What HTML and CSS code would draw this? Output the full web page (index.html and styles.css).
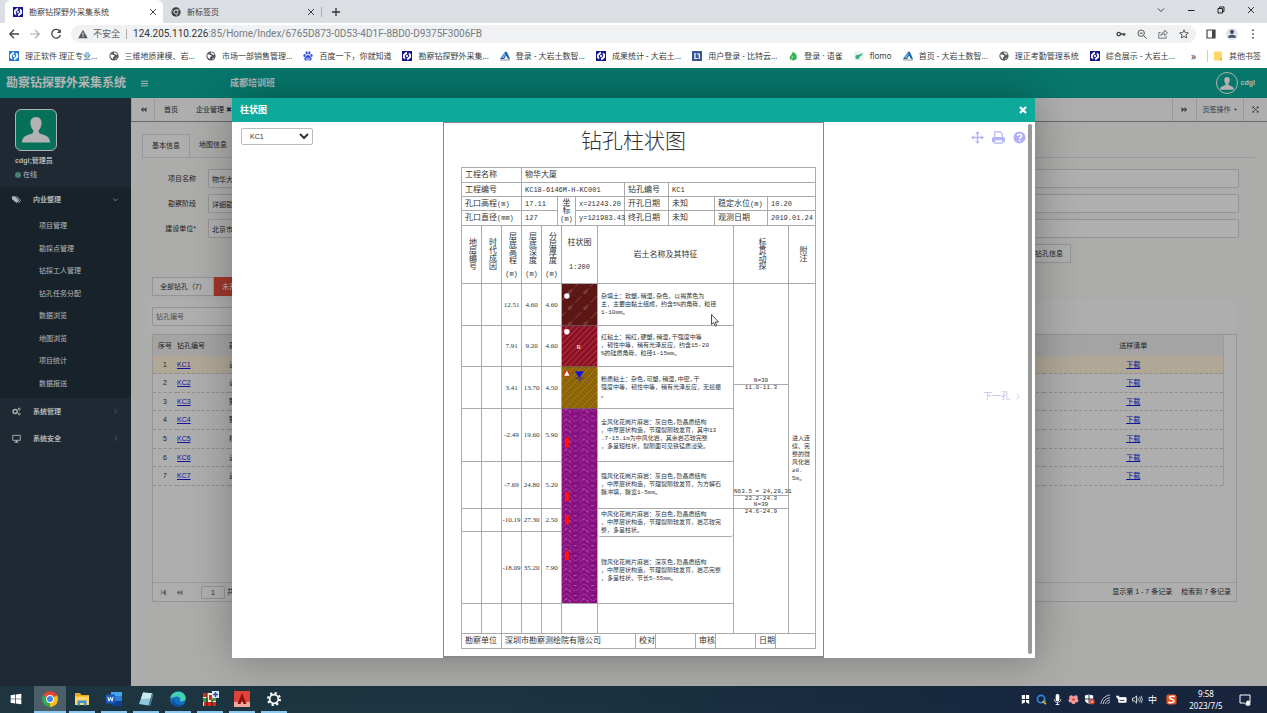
FILE: index.html
```html
<!DOCTYPE html>
<html lang="zh-CN">
<head>
  <meta charset="UTF-8">
  <title>勘察钻探野外采集系统</title>
  <link rel="stylesheet" href="styles.css">
</head>
<body>
  <!-- shared icons -->
  <svg class="defs" width="0" height="0">
    <symbol id="i-logo" viewBox="0 0 10 10"><rect width="10" height="10" fill="#14148c"/><path d="M4.500.6L1 3.400v3.400l2.200 1.700V5.900L2.400 5l2.800-2.600zM5.500 9.400L9 6.600V3.200L6.800 1.500v2.600l.8.9-2.800 2.600z" fill="#fff"/><path d="M5 3.600L6.300 5 5 6.400 3.700 5z" fill="#fff"/></symbol>
    <symbol id="i-logo2" viewBox="0 0 10 10"><rect width="10" height="10" fill="#2277d8"/><path d="M4.500.6L1 3.400v3.400l2.200 1.700V5.900L2.400 5l2.800-2.600zM5.500 9.400L9 6.600V3.200L6.800 1.500v2.600l.8.9-2.800 2.600z" fill="#fff"/><path d="M5 3.600L6.300 5 5 6.400 3.700 5z" fill="#fff"/></symbol>
    <symbol id="i-globe" viewBox="0 0 10 10"><circle cx="5" cy="5" r="4.600" fill="#55585c"/><path d="M1.400 3.600C3 3 4 4 5 4.200c1 .2.4 1.400-.4 1.500C3.800 6 4.400 7.200 3.600 8 2.200 7.400 1 5.600 1.400 3.600zM5 1.300c1.400 0 3 .9 3.500 2.700-.9.2-1.500-.6-2.300-.7C5.400 3.200 4.600 2 5 1.300zM6.200 8.500c0-1 .9-1.500 2.100-2-.5 1.200-1.200 1.700-2.100 2z" fill="#fff"/></symbol>
    <symbol id="i-peak" viewBox="0 0 10 10"><path d="M5.200.8L0 8h4.200L6 4.600 8.200 8H10L6.800.8z" fill="#1b62ad"/><path d="M5 2L1.500 7h2L5.800 3z" fill="#7db9ea"/><path d="M0 9h10" stroke="#8a9099"/></symbol>
    <symbol id="i-user" viewBox="0 0 28 26"><path d="M14 0c-4 0-6 3-5.500 7 .3 3 1.500 5 2.800 6.300.3 1.700-.3 2.700-1.300 3.200C5 18.500 0 19 0 25.500h28c0-6.500-5-7-10-9-1-.5-1.600-1.500-1.300-3.200C18 12 19.200 10 19.500 7 20 3 18 0 14 0z"/></symbol>
    <symbol id="i-left2" viewBox="0 0 8 8"><path d="M4 1v6L.8 4zM7.400 1v6L4.200 4z" fill="currentColor"/></symbol>
    <symbol id="i-right2" viewBox="0 0 8 8"><path d="M.6 1v6l3.200-3zM4 1v6l3.200-3z" fill="currentColor"/></symbol>
    <symbol id="i-x" viewBox="0 0 8 8"><path d="M1 1l6 6M7 1L1 7" stroke="currentColor" fill="none"/></symbol>
  </svg>

  <header class="chrome">
    <div class="tabstrip">
      <div class="tab active"><svg class="fav"><use href="#i-logo"/></svg><span>勘察钻探野外采集系统</span><button class="tab-x" aria-label="关闭标签页"><svg><use href="#i-x"/></svg></button></div>
      <div class="tab"><svg class="fav" viewBox="0 0 10 10"><circle cx="5" cy="5" r="4.700" fill="#3c4043"/><circle cx="5" cy="5" r="2.400" fill="#dbdee3"/><circle cx="5" cy="5" r="1.600" fill="#3c4043"/><path d="M5 2.800h4.200M3 6L1 2.800M7 6L5 9.500" stroke="#dbdee3" stroke-width=".6"/></svg><span>新标签页</span><button class="tab-x" aria-label="关闭标签页"><svg><use href="#i-x"/></svg></button></div>
      <button class="new-tab" aria-label="新建标签页"><svg viewBox="0 0 10 10"><path d="M5 1v8M1 5h8" stroke="#333" stroke-width="1.300"/></svg></button>
      <div class="win">
        <button aria-label="标签页列表"><svg viewBox="0 0 10 10"><path d="M2 3.500l3 3 3-3" fill="none" stroke="#444"/></svg></button>
        <button aria-label="最小化"><svg viewBox="0 0 10 10"><path d="M2 5.500h6.500" stroke="#222"/></svg></button>
        <button aria-label="还原"><svg viewBox="0 0 10 10"><path d="M2 3.500h4.500V8H2zM3.500 3.500V2H8v4.500H6.500" fill="none" stroke="#222"/></svg></button>
        <button aria-label="关闭"><svg viewBox="0 0 10 10"><path d="M2 2l6 6M8 2L2 8" stroke="#222" stroke-width=".9"/></svg></button>
      </div>
    </div>
    <div class="toolbar">
      <button aria-label="后退"><svg viewBox="0 0 12 12"><path d="M11 6H2M6 1.800L1.800 6 6 10.200" fill="none" stroke="#444" stroke-width="1.300"/></svg></button>
      <button aria-label="前进"><svg viewBox="0 0 12 12"><path d="M1 6h9M6 1.800L10.200 6 6 10.200" fill="none" stroke="#aaa" stroke-width="1.200"/></svg></button>
      <button aria-label="刷新"><svg viewBox="0 0 12 12"><path d="M10 3.500A4.400 4.400 0 1 0 10.400 7" fill="none" stroke="#444" stroke-width="1.300"/><path d="M10.800 1v4H7z" fill="#444"/></svg></button>
      <div class="omnibox">
        <svg class="warn" viewBox="0 0 10 10"><path d="M5 .8L9.800 9.200H.2z" fill="#55585c"/><path d="M5 3.700v2.600M5 7v1" stroke="#fff"/></svg>
        <span class="unsafe">不安全</span>
        <span class="url"><b>124.205.110.226</b>:85/Home/Index/6765D873-0D53-4D1F-8BD0-D9375F3006FB</span>
        <span class="omni-icons">
          <svg viewBox="0 0 10 10"><circle cx="2.800" cy="5" r="1.700" fill="none" stroke="#444" stroke-width="1.300"/><path d="M4.500 5h5M8 5v2" stroke="#444" stroke-width="1.500"/></svg>
          <svg viewBox="0 0 10 10"><circle cx="4.200" cy="4.200" r="3.200" fill="none" stroke="#555"/><path d="M6.500 6.500L9.500 9.500M2.700 4.200h3" stroke="#555"/></svg>
          <svg viewBox="0 0 10 10"><path d="M2.500 3.500H.8v5.700h7.400V7M3 6.500c.3-2.400 1.700-3.500 3.700-3.500V1.200L9.500 4 6.700 6.500V4.800C5 4.800 4 5.300 3 6.500z" fill="none" stroke="#555" stroke-width=".8"/></svg>
          <svg viewBox="0 0 10 10"><path d="M5 .8l1.200 2.800 3.100.3L7 6l.7 3L5 7.400 2.300 9 3 6 .7 3.900l3.100-.3z" fill="none" stroke="#444" stroke-width=".9"/></svg>
        </span>
      </div>
      <button aria-label="侧边栏"><svg viewBox="0 0 12 12"><path d="M2 2h8v8H2z" fill="none" stroke="#444" stroke-width="1.200"/><path d="M7 2h3v8H7z" fill="#444"/></svg></button>
      <button aria-label="用户" class="me"><svg viewBox="0 0 12 12"><circle cx="6" cy="3.800" r="2.100" fill="#44506a"/><path d="M1.800 9.800c0-4 8.400-4 8.400 0z" fill="#44506a"/></svg></button>
      <button aria-label="菜单"><svg viewBox="0 0 12 12"><path d="M6 1.500v1.600M6 5.200v1.600M6 8.900v1.600" stroke="#444" stroke-width="1.600"/></svg></button>
    </div>
    <nav class="bookmarks">
      <a href="#"><svg><use href="#i-logo2"/></svg>理正软件 理正专业...</a>
      <a href="#"><svg><use href="#i-globe"/></svg>三维地质建模、岩...</a>
      <a href="#"><svg><use href="#i-globe"/></svg>市场一部销售管理...</a>
      <a href="#"><svg viewBox="0 0 10 10" fill="#3050d8"><ellipse cx="1.500" cy="4.500" rx="1.100" ry="1.500"/><ellipse cx="3.600" cy="1.900" rx="1.100" ry="1.600"/><ellipse cx="6.400" cy="1.900" rx="1.100" ry="1.600"/><ellipse cx="8.500" cy="4.500" rx="1.100" ry="1.500"/><path d="M5 4c1.400 0 1.900 1.400 3 2.400 1.500 1.500.3 3.400-1.400 3.100-1-.2-2.200-.2-3.200 0C1.700 9.800.5 7.900 2 6.400 3.100 5.400 3.600 4 5 4z"/><path d="M3 7.200h1.500v1.300H3.200zM5.600 6.600v1.900H7V6.600" fill="none" stroke="#fff" stroke-width=".5"/></svg>百度一下，你就知道</a>
      <a href="#"><svg><use href="#i-logo"/></svg>勘察钻探野外采集...</a>
      <a href="#"><svg><use href="#i-peak"/></svg>登录 - 大岩土数智...</a>
      <a href="#"><svg><use href="#i-logo"/></svg>成果统计 - 大岩土...</a>
      <a href="#"><svg viewBox="0 0 10 10"><rect width="10" height="10" fill="#3a5795"/><path d="M3 2v5.500h2.500M4.800 3h2.500v5" fill="none" stroke="#fff" stroke-width="1.200"/></svg>用户登录 - 比特云...</a>
      <a href="#"><svg viewBox="0 0 10 10"><path d="M4.500 1C8 2 9.500 5 8.500 7.500S3.500 10 2 8s1.500-3 2.500-7z" fill="#35b558"/><path d="M1.500 9c2 0 3-2 3-4" stroke="#a8e6b4" fill="none"/></svg>登录 · 语雀</a>
      <a href="#"><svg viewBox="0 0 10 10"><rect width="10" height="10" rx="2" fill="#f1f4f2"/><circle cx="3.500" cy="6" r="2.200" fill="#35b58a"/><path d="M3 4.500L8.800 2 7 5.500z" fill="#35b58a"/></svg>flomo</a>
      <a href="#"><svg><use href="#i-peak"/></svg>首页 - 大岩土数智...</a>
      <a href="#"><svg><use href="#i-globe"/></svg>理正考勤管理系统</a>
      <a href="#"><svg><use href="#i-logo"/></svg>综合展示 - 大岩土...</a>
      <span class="more">»</span>
      <a href="#" class="other"><svg viewBox="0 0 10 10"><path d="M1 .5h8v9H1z" fill="#ffd766"/><path d="M7 7h2v2.500H7z" fill="#e8b93c"/></svg>其他书签</a>
    </nav>
  </header>

  <div class="app">
    <header class="app-head">
      <h1>勘察钻探野外采集系统</h1>
      <button class="burger" aria-label="折叠菜单"><svg viewBox="0 0 8 8"><path d="M0 1.500h8M0 4h8M0 6.500h8" stroke="#fff" stroke-width="1.200"/></svg></button>
      <strong>成都培训班</strong>
      <a href="#" class="account"><span><svg><use href="#i-user"/></svg></span>cdgl</a>
    </header>

    <div class="app-body">
      <aside class="sidebar">
        <div class="profile">
          <div class="avatar"><svg><use href="#i-user"/></svg></div>
          <b>cdgl;管理员</b>
          <p><i></i>在线</p>
        </div>
        <div class="group open">
          <a href="#" class="group-head"><svg viewBox="0 0 10 10"><path d="M0 1.500h3.500L8 6 5 9 0 4.800z" fill="#fff"/><path d="M5 1.500L9.600 6 6.800 9" fill="none" stroke="#fff"/></svg><span>内业整理</span><svg class="arrow" viewBox="0 0 8 8"><path d="M1.500 3L4 5.500 6.500 3" fill="none" stroke="#ccd"/></svg></a>
          <ul>
            <li><a href="#">项目管理</a></li>
            <li><a href="#">勘探点管理</a></li>
            <li><a href="#">钻探工人管理</a></li>
            <li><a href="#">钻孔任务分配</a></li>
            <li><a href="#">数据浏览</a></li>
            <li><a href="#">地图浏览</a></li>
            <li><a href="#">项目统计</a></li>
            <li><a href="#">数据报送</a></li>
          </ul>
        </div>
        <div class="group"><a href="#" class="group-head"><svg viewBox="0 0 10 10" fill="none" stroke="#fff"><circle cx="3.500" cy="5" r="2.300" stroke-width="1.600"/><circle cx="8" cy="2.300" r="1.100"/><circle cx="8" cy="7.700" r="1.100"/></svg><span>系统管理</span><svg class="arrow" viewBox="0 0 8 8"><path d="M3 1.500L5.500 4 3 6.500" fill="none" stroke="#789"/></svg></a></div>
        <div class="group"><a href="#" class="group-head"><svg viewBox="0 0 10 10"><path d="M.8 1.500h8.400v5.500H.8z" fill="none" stroke="#fff"/><path d="M3 9h4M5 7v2" stroke="#fff" stroke-width="1.300"/></svg><span>系统安全</span><svg class="arrow" viewBox="0 0 8 8"><path d="M3 1.500L5.500 4 3 6.500" fill="none" stroke="#789"/></svg></a></div>
      </aside>

      <main class="content">
        <nav class="page-tabs">
          <button class="icon-btn" aria-label="向左"><svg><use href="#i-left2"/></svg></button>
          <a href="#">首页</a>
          <a href="#">企业管理 ✖</a>
          <span class="spacer"></span>
          <button class="icon-btn" aria-label="向右"><svg><use href="#i-right2"/></svg></button>
          <button class="ops">页签操作<svg viewBox="0 0 6 6"><path d="M1 2h4L3 4.500z" fill="currentColor"/></svg></button>
          <button class="icon-btn" aria-label="全屏"><svg viewBox="0 0 8 8"><path d="M1 1l6 6M7 1L1 7" stroke="currentColor"/><path d="M.5.500H3L.5 3zM7.500.500V3L5 .5zM.5 7.500V5L3 7.500zM7.500 7.500H5L7.500 5z" fill="currentColor"/></svg></button>
        </nav>
        <div class="page">
          <nav class="info-tabs"><a href="#" class="on">基本信息</a><a href="#">地图信息</a></nav>
          <form class="info">
            <label for="f1">项目名称</label><input id="f1" value="物华大厦">
            <label for="f2">勘察阶段</label><input id="f2" value="详细勘察">
            <label for="f3">建设单位*</label><input id="f3" value="北京市">
          </form>
          <div class="info-actions"><button>钻孔信息</button></div>
          <div class="state-btns"><button>全部钻孔（7）</button><button class="red">未开孔</button></div>
          <div class="filter"><input aria-label="钻孔编号" placeholder="钻孔编号"></div>
          <div class="grid-box">
            <div class="grid-scroll">
              <table class="grid">
                <colgroup><col class="c-no"><col class="c-id"><col><col class="c-dl"></colgroup>
                <thead><tr><th>序号</th><th>钻孔编号</th><th>勘</th><th>送样清单</th></tr></thead>
                <tbody>
                  <tr class="sel"><td>1</td><td><a href="#">KC1</a></td><td>近</td><td><a href="#">下载</a></td></tr>
                  <tr><td>2</td><td><a href="#">KC2</a></td><td>近</td><td><a href="#">下载</a></td></tr>
                  <tr><td>3</td><td><a href="#">KC3</a></td><td>野</td><td><a href="#">下载</a></td></tr>
                  <tr><td>4</td><td><a href="#">KC4</a></td><td>野</td><td><a href="#">下载</a></td></tr>
                  <tr><td>5</td><td><a href="#">KC5</a></td><td>杨</td><td><a href="#">下载</a></td></tr>
                  <tr><td>6</td><td><a href="#">KC6</a></td><td>近</td><td><a href="#">下载</a></td></tr>
                  <tr><td>7</td><td><a href="#">KC7</a></td><td>近</td><td><a href="#">下载</a></td></tr>
                </tbody>
              </table>
            </div>
            <div class="pager">
              <button aria-label="首页"><svg viewBox="0 0 8 8"><path d="M1.500 1v6M6.500 1v6L3 4z" stroke="currentColor" fill="currentColor" stroke-width=".7"/></svg></button>
              <button aria-label="上一页"><svg><use href="#i-left2"/></svg></button>
              <input aria-label="页码" value="1"><span>共 1 页</span>
              <span class="total">显示第 1 - 7 条记录</span><span>检索到 7 条记录</span>
            </div>
          </div>
        </div>
      </main>
    </div>

    <div class="shade">
      <section class="modal">
        <header><h2>柱状图</h2><button aria-label="关闭"><svg viewBox="0 0 8 8"><path d="M1 1l6 6M7 1L1 7" stroke="#fff" stroke-width="2.200"/></svg></button></header>
        <div class="modal-body">
          <div class="side"><select aria-label="钻孔"><option>KC1</option><option>KC2</option></select></div>

          <article class="sheet">
            <h3>钻孔柱状图</h3>
            <table class="log meta">
              <colgroup><col class="w60"><col class="w36"><col class="w18"><col class="w49"><col class="w44"><col class="w46"><col class="w53"><col class="w48"></colgroup>
              <tr><td>工程名称</td><td colspan="7">物华大厦</td></tr>
              <tr><td>工程编号</td><td colspan="3" class="n">KC18-6146M-H-KC001</td><td>钻孔编号</td><td colspan="3" class="n">KC1</td></tr>
              <tr><td>孔口高程<span class="n">(m)</span></td><td class="n">17.11</td><td rowspan="2" class="coord">坐<br>标<br><span class="n">(m)</span></td><td class="n">x=21243.20</td><td>开孔日期</td><td>未知</td><td>稳定水位<span class="n">(m)</span></td><td class="n">10.20</td></tr>
              <tr><td>孔口直径<span class="n">(mm)</span></td><td class="n">127</td><td class="n">y=121983.43</td><td>终孔日期</td><td>未知</td><td>观测日期</td><td class="n">2019.01.24</td></tr>
            </table>
            <table class="log strata">
              <colgroup><col class="w20"><col class="w20"><col class="w20"><col class="w20"><col class="w20"><col class="w36"><col><col class="w55"><col class="w27"></colgroup>
              <thead>
                <tr>
                  <th><span class="v">地层编号</span></th>
                  <th><span class="v">时代成因</span></th>
                  <th><span class="v">层底高程</span><small>(m)</small></th>
                  <th><span class="v">层底深度</span><small>(m)</small></th>
                  <th><span class="v">分层厚度</span><small>(m)</small></th>
                  <th class="scale">柱状图<span class="n">1:200</span></th>
                  <th>岩土名称及其特征</th>
                  <th><span class="v">标贯动探</span></th>
                  <th><span class="v">附注</span></th>
                </tr>
              </thead>
              <tbody>
                <tr class="h42"><td></td><td></td><td>12.51</td><td>4.60</td><td>4.60</td>
                  <td rowspan="7" class="column">
                    <svg viewBox="0 0 36 320" preserveAspectRatio="none">
                      <defs>
                        <pattern id="p1" width="16" height="16" patternUnits="userSpaceOnUse"><path d="M-2 18L18-2" stroke="#a06a60" stroke-width=".7" stroke-dasharray="8 3"/><circle cx="8" cy="8" r="1.500" fill="none" stroke="#96605a" stroke-width=".5"/></pattern>
                        <pattern id="p2" width="6" height="6" patternUnits="userSpaceOnUse"><path d="M-1 7L7-1" stroke="#c0606c" stroke-width=".7"/></pattern>
                        <pattern id="p3" width="8" height="8" patternUnits="userSpaceOnUse"><path d="M-1 9L9-1" stroke="#c09a48" stroke-width=".7"/><path d="M3 9l6-6M-1 5l6-6" stroke="#c09a48" stroke-width=".6" stroke-dasharray="1.500 1.500"/></pattern>
                        <pattern id="p4" width="18" height="10" patternUnits="userSpaceOnUse"><path d="M0 5C3 0 6 0 9 4s6 5 9 1M0 10c3-5 6-5 9-1s6 5 9 1" fill="none" stroke="#b04fad" stroke-width=".7"/><path d="M3 6.500l2-1.500M12 2.500h3M7 8h2" stroke="#d58ad2" stroke-width=".6"/></pattern>
                      </defs>
                      <path d="M0 0h36v42H0z" fill="#5c1614"/><path d="M0 0h36v42H0z" fill="url(#p1)"/>
                      <path d="M0 42h36v41H0z" fill="#8e0f22"/><path d="M0 42h36v41H0z" fill="url(#p2)"/>
                      <path d="M0 83h36v42H0z" fill="#8a6000"/><path d="M0 83h36v42H0z" fill="url(#p3)"/>
                      <path d="M0 125h36v195H0z" fill="#86107f"/><path d="M0 125h36v195H0z" fill="url(#p4)"/>
                      <path d="M0 42h36M0 83h36M0 125h36" stroke="#555" stroke-width=".6"/>
                      <circle cx="5" cy="12" r="2.800" fill="#fff"/><circle cx="5" cy="48" r="2.800" fill="#fff"/>
                      <text x="15" y="65" class="r">R</text>
                      <circle cx="5" cy="90" r="3" fill="#e02818"/><path d="M5 87l2.800 5H2.200z" fill="#fff"/>
                      <path d="M14 88h8l-4 6zM14 94.500h8M16.500 96.500h3" fill="#1010e8" stroke="#1010e8" stroke-width=".6"/>
                      <path d="M3 154h4v10H3zM3 209h4v9H3zM3 232h4v9H3zM3 268h4v9H3z" fill="#ff1408"/>
                    </svg>
                  </td>
                  <td class="desc">杂填土：软塑,稍湿,杂色，以褐黄色为<br>主，主要由黏土组成，约含5%的角砾，粒径<br>1-10mm。</td>
                  <td rowspan="8" class="spt">
                    <div class="test first"><span>N=39</span><span>11.0-11.3</span></div>
                    <div class="test second"><span>N63.5 = 24,29,31</span><span>22.2-24.3</span></div>
                    <div class="test"><span>N=39</span><span>24.6-24.9</span></div>
                  </td>
                  <td rowspan="8" class="remark">进入连<br>续、完<br>整的微<br>风化岩<br>≥8.<br>5m。</td></tr>
                <tr class="h41"><td></td><td></td><td>7.91</td><td>9.20</td><td>4.60</td><td class="desc">红粘土：褐红,硬塑,稍湿,干强度中等<br>，韧性中等，稍有光泽反应，约含15-20<br>%的硅质角砾，粒径1-15mm。</td></tr>
                <tr class="h42"><td></td><td></td><td>3.41</td><td>13.70</td><td>4.50</td><td class="desc">粉质粘土：杂色,可塑,稍湿,中密,干<br>强度中等，韧性中等，稍有光泽反应，无摇振<br>。</td></tr>
                <tr class="h53"><td></td><td></td><td>-2.49</td><td>19.60</td><td>5.90</td><td class="desc">全风化花岗片麻岩：灰白色,隐晶质结构<br>，中厚层状构造，节理裂隙较发育，其中13<br>.7-15.1m为中风化岩，其余岩芯较完整<br>，多呈短柱状，裂隙面可见铁锰质浸染。</td></tr>
                <tr class="h47"><td></td><td></td><td>-7.69</td><td>24.80</td><td>5.20</td><td class="desc">强风化花岗片麻岩：灰白色,隐晶质结构<br>，中厚层状构造，节理裂隙较发育，为方解石<br>脉冲填，脉宽1-5mm。</td></tr>
                <tr class="h23"><td></td><td></td><td>-10.19</td><td>27.30</td><td>2.50</td>
                  <td rowspan="2" class="desc pair">
                    <p>中风化花岗片麻岩：灰白色,隐晶质结构<br>，中厚层状构造，节理裂隙较发育，岩芯较完<br>整，多呈柱状。</p>
                    <p>微风化花岗片麻岩：深灰色,隐晶质结构<br>，中厚层状构造，节理裂隙较发育，岩芯完整<br>，多呈柱状，节长5-55mm。</p>
                  </td></tr>
                <tr class="h72"><td></td><td></td><td>-18.09</td><td>35.20</td><td>7.90</td></tr>
                <tr class="h30"><td></td><td></td><td></td><td></td><td></td><td></td><td></td></tr>
              </tbody>
            </table>
            <table class="log sign">
              <colgroup><col class="w40"><col><col class="w20"><col class="w40"><col class="w20"><col class="w40"><col class="w20"><col class="w40"></colgroup>
              <tr><td>勘察单位</td><td>深圳市勘察测绘院有限公司</td><td>校对</td><td></td><td>审核</td><td></td><td>日期</td><td></td></tr>
            </table>
          </article>

          <div class="side right">
            <div class="tools">
              <button aria-label="移动"><svg viewBox="0 0 14 14"><path d="M7 2v10M2 7h10" stroke="#b4b4f8" stroke-width="1.500"/><path d="M7 0l2.500 3h-5zM7 14l2.500-3h-5zM0 7l3-2.500v5zM14 7l-3-2.500v5z" fill="#b4b4f8"/></svg></button>
              <button aria-label="打印"><svg viewBox="0 0 14 14"><path d="M3 7V1h6l2 2v4" fill="none" stroke="#b4b4f8" stroke-width="1.300"/><path d="M1.500 6.500h11Q14 7 14 8v4h-2.500V10h-9v2H0V8q0-1 1.500-1.500z" fill="#b4b4f8"/><path d="M3 10v3h8v-3" fill="none" stroke="#b4b4f8" stroke-width="1.200"/></svg></button>
              <button aria-label="帮助"><svg viewBox="0 0 14 14"><circle cx="7" cy="7" r="6.400" fill="#b0b0f8"/><path d="M4.900 5.400C5 2.800 9.200 2.900 9.200 5.300 9.200 7 7.100 6.700 7.100 8.600M7.100 9.600v1.700" fill="none" stroke="#fff" stroke-width="1.700"/></svg></button>
            </div>
            <a href="#" class="next">下一孔<svg viewBox="0 0 8 8"><path d="M3 1l3 3-3 3" fill="none" stroke="currentColor"/></svg></a>
          </div>
          <div class="scrollbar"></div>
          <svg class="cursor" viewBox="0 0 8 13"><path d="M.5.500v10l2.300-2 1.500 3.700 1.500-.7L4.300 8h3.200z" fill="#fff" stroke="#222" stroke-width=".8"/></svg>
        </div>
      </section>
    </div>
  </div>

  <footer class="taskbar">
    <button class="task plain" aria-label="开始"><svg viewBox="0 0 18 18"><path d="M3 4.700l5-.7v4.600H3zM8.800 3.900L15 3v5.600H8.800zM3 9.400h5V14l-5-.7zM8.800 9.400H15V15l-6.200-.9z" fill="#fff"/></svg></button>
    <button class="task current" aria-label="Chrome"><svg viewBox="0 0 18 18"><path d="M9 9L2.200 5A8 8 0 0 1 16 5.200z" fill="#ea4335"/><path d="M9 9l7-3.800A8 8 0 0 1 8.800 17z" fill="#fbc116"/><path d="M9 9l-.2 8A8 8 0 0 1 2.200 5z" fill="#34a853"/><circle cx="9" cy="9" r="3.900" fill="#fff"/><circle cx="9" cy="9" r="3" fill="#4285f4"/></svg></button>
    <button class="task" aria-label="资源管理器"><svg viewBox="0 0 18 18"><path d="M2 3h5l1.500 2H16v10H2z" fill="#e9a820"/><path d="M2 6.500h14V15H2z" fill="#ffd766"/><path d="M4.500 15.500v-5h9v5H11V13H7v2.500z" fill="#3b93d8"/></svg></button>
    <button class="task" aria-label="Word"><svg viewBox="0 0 18 18"><path d="M6 2h11v14H6z" fill="#2b7cd3"/><path d="M6 2h11v4H6z" fill="#41a5ee"/><path d="M6 11h11v5H6z" fill="#103f91"/><path d="M1 4.500h9v9H1z" fill="#185abd"/><path d="M2.800 6.800L4 11.200l1.500-4 1.500 4 1.200-4.400" fill="none" stroke="#fff"/></svg></button>
    <button class="task" aria-label="记事本"><svg viewBox="0 0 18 18"><path d="M6 2.500l9 .7-3.500 12.300L2 14z" fill="#8fc7d8"/><path d="M6 2.500l9 .7-1.500 5L4 9z" fill="#c9eaf0"/><path d="M15 3.200l1.500 1-3.300 12-1.700-.7z" fill="#4a7f95"/></svg></button>
    <button class="task" aria-label="Edge"><svg viewBox="0 0 18 18"><circle cx="9" cy="9" r="7.800" fill="#1271c4"/><path d="M1.300 8.500C2 .5 15.500-1 16.800 8c.2 3-3.800 4-6 3 2-3-2-5.500-5-4-1.600.6-3.500.5-4.500 1.500z" fill="#45d0b0"/><path d="M6 8c-2.500 4 1.500 8 7 6.500 1-.3 2-.8 2.500-1.200C13 18 6.500 18 4 14 2.600 11.500 4 9 6 8z" fill="#0c4f9b"/></svg></button>
    <button class="task" aria-label="理正"><svg viewBox="0 0 18 18"><path d="M2 3h13v13H2z" fill="#f3efd0"/><path d="M2 3h4v4H2zM8 5h3v5H8zM3 12h12v4H3z" fill="#d22b20"/><path d="M2 8h5v4H2zM10 8h5v3h-5z" fill="#3aa045"/><path d="M6 3v13M11 10v6" stroke="#222"/><path d="M11 1h7v7h-7z" fill="#dfeaff"/><path d="M14.500 2v5M12 4.500h5" stroke="#2b4fb0" stroke-width="1.500"/></svg></button>
    <button class="task" aria-label="AutoCAD"><svg viewBox="0 0 18 18"><path d="M1 1h16v16H1z" fill="#e0453a"/><path d="M1 12h16v5H1z" fill="#f2aaa0"/><path d="M9 3l4.500 11h-3L9 10l-1.500 4h-3z" fill="#8e120c"/></svg></button>
    <button class="task" aria-label="设置"><svg viewBox="0 0 18 18"><circle cx="9" cy="9" r="4.300" fill="none" stroke="#fff" stroke-width="1.700"/><circle cx="9" cy="9" r="6" fill="none" stroke="#fff" stroke-width="2" stroke-dasharray="2.300 2.400"/></svg></button>
    <div class="tray">
      <svg viewBox="0 0 12 12"><path d="M2 1h3.500v4.500H2zM6.500 1H10v4.500H6.500zM2 6.500h3.500V9L2 11zM6.500 6.500H10V11L6.500 9z" fill="#fff"/></svg>
      <svg viewBox="0 0 12 12"><circle cx="5.500" cy="5.500" r="4" fill="none" stroke="#2b8ce8" stroke-width="1.700"/><path d="M7 8l4 3" stroke="#f0b030" stroke-width="1.500"/><path d="M8 6.500l2.500 2" stroke="#3dba60" stroke-width="1.500"/></svg>
      <svg viewBox="0 0 12 12"><rect x="4" y="0" width="4" height="8" rx="2" fill="#fff"/><path d="M2.500 6c0 4 7 4 7 0M6 9v2.500M4 11.500h4" fill="none" stroke="#fff"/></svg>
      <svg viewBox="0 0 12 12"><g fill="#f09a9a"><circle cx="3.500" cy="3.500" r="2.200"/><circle cx="8.500" cy="3.500" r="2.200"/><circle cx="2.800" cy="7" r="2.200"/><circle cx="9.200" cy="7" r="2.200"/><circle cx="6" cy="9" r="2.200"/><circle cx="6" cy="5.500" r="3"/></g><circle cx="6" cy="6" r="1.300" fill="#d33"/></svg>
      <svg viewBox="0 0 12 12"><path d="M1 1.500l4.500-1 4.500 1V6c0 3-2.500 4-4.500 5C3.500 10 1 9 1 6z" fill="#fff"/><path d="M5.500.5v10M1 5.500h9" stroke="#1b2c45"/><circle cx="8.800" cy="8.500" r="3" fill="#e03c28"/><path d="M7.600 7.300L10 9.700M10 7.300L7.600 9.700" stroke="#fff" stroke-width=".8"/></svg>
      <svg viewBox="0 0 12 12"><path d="M1 11C1.500 6 5 2 11 1M3.500 11c.5-4 3-6.500 7.500-7M6 11c.5-2.500 2-4 5-4.500M8.500 11c.3-1.200 1-2 2.500-2.200" fill="none" stroke="#dfe4ea" stroke-width=".9"/></svg>
      <svg viewBox="0 0 12 12"><path d="M3 4h8v5H3z" fill="#fff" stroke="#fff"/><path d="M0 2h3.500v3H1z" fill="#fff"/><path d="M4 7h5" stroke="#1b2c45"/></svg>
      <svg viewBox="0 0 12 12"><path d="M.5 4.500h2L5 2v8L2.500 7.500h-2z" fill="none" stroke="#fff" stroke-width=".9"/><path d="M6.500 4.500q1 1.500 0 3M8.200 3q2 3 0 6M10 2q2.500 4 0 8" fill="none" stroke="#fff" stroke-width=".8"/></svg>
      <span>中</span>
      <svg viewBox="0 0 12 12"><rect x=".5" y=".5" width="11" height="11" rx="2" fill="#f0501c"/><path d="M9.500 2.800C6 1.700 3 3 4 4.500s5 .8 4.800 3C8.600 9.500 5 10 2.500 9" fill="none" stroke="#fff" stroke-width="1.700"/></svg>
    </div>
    <div class="clock"><span>9:58</span><span>2023/7/5</span></div>
    <button class="notice" aria-label="通知"><svg viewBox="0 0 12 12"><path d="M1 1h10v8H8v2.500L5.500 9H1z" fill="none" stroke="#fff"/><path d="M10.500 7a2.500 2.500 0 1 0 1 3.500" fill="#fff"/></svg></button>
  </footer>
</body>
</html>
```
FILE: styles.css
```css
* {
  box-sizing: border-box;
}
body {
  margin: 0;
  height: 100vh;
  display: flex;
  flex-direction: column;
  overflow: hidden;
  font: 7px/10px "Liberation Sans", "Noto Sans CJK SC", sans-serif;
  color: #333;
}
h1, h2, h3, p, ul {
  margin: 0;
  padding: 0;
}
a {
  color: inherit;
  text-decoration: none;
}
button, input, select {
  font: inherit;
  color: inherit;
  margin: 0;
}
button {
  padding: 0;
  border: 0;
  background: none;
}
svg {
  display: block;
  flex: none;
}
.defs {
  position: absolute;
}

/* browser window */
.chrome {
  font: 8px/12px "Noto Sans", "Noto Sans CJK SC", sans-serif;
  color: #3c4043;
  background: #fff;
}
.tabstrip {
  display: flex;
  align-items: center;
  height: 23px;
  padding-left: 5px;
  background: #dbdee3;
}
.tab {
  display: flex;
  align-items: center;
  gap: 6px;
  width: 158px;
  height: 23px;
  padding: 0 6px 0 8px;
}
.tab.active {
  background: #fff;
  border-radius: 6px 6px 0 0;
}
.tab .fav {
  width: 10px;
  height: 10px;
}
.tab-x {
  margin-left: auto;
}
.tab-x svg {
  width: 8px;
  height: 8px;
}
.new-tab {
  padding-left: 9px;
  border-left: 1px solid #aab;
}
.new-tab svg, .win svg {
  width: 10px;
  height: 10px;
}
.win {
  display: flex;
  gap: 20px;
  margin-left: auto;
  padding: 0 11px 4px 0;
}
.toolbar {
  display: flex;
  align-items: center;
  gap: 9px;
  height: 22px;
  padding: 0 8px;
}
.toolbar button svg {
  width: 12px;
  height: 12px;
}
.me {
  border-radius: 50%;
  background: #dfe3ea;
}
.omnibox {
  display: flex;
  flex: 1;
  align-items: center;
  height: 18px;
  padding: 0 7px;
  border-radius: 9px;
  background: #eff1f3;
}
.warn {
  width: 10px;
  height: 10px;
}
.unsafe {
  margin: 0 6px 0 5px;
  padding-right: 6px;
  border-right: 1px solid #aaa;
  font-size: 9px;
  line-height: 10px;
  color: #5f6368;
}
.url {
  font-family: Roboto, sans-serif;
  font-size: 10px;
  color: #777b80;
}
.url b {
  font-weight: normal;
  color: #333;
}
.omni-icons {
  display: flex;
  gap: 11px;
  margin-left: auto;
}
.omni-icons svg {
  width: 10px;
  height: 10px;
}
.bookmarks {
  display: flex;
  align-items: center;
  gap: 11px;
  height: 23px;
  padding: 0 6px 2px 9px;
  white-space: nowrap;
}
.bookmarks a {
  display: flex;
  align-items: center;
  gap: 6px;
}
.bookmarks svg {
  width: 10px;
  height: 10px;
}
.more {
  margin-left: auto;
  font-size: 10px;
}
.bookmarks .other {
  padding-left: 5px;
  border-left: 1px solid #ccc;
}

/* application */
.app {
  position: relative;
  display: flex;
  flex: 1;
  flex-direction: column;
  min-height: 0;
}
.app-head {
  display: flex;
  align-items: center;
  height: 30px;
  padding: 0 12px 0 6px;
  background: #0ba99a;
  color: #fff;
}
.app-head h1 {
  font-size: 12px;
  line-height: 16px;
}
.burger {
  margin: 0 82px 0 15px;
}
.burger svg {
  width: 7px;
  height: 7px;
}
.app-head strong {
  font-size: 9px;
}
.account {
  display: flex;
  align-items: center;
  gap: 3px;
  margin-left: auto;
  font-weight: bold;
}
.account span {
  display: flex;
  align-items: center;
  justify-content: center;
  width: 22px;
  height: 22px;
  border: 1px solid #fff;
  border-radius: 50%;
}
.account svg {
  width: 14px;
  height: 13px;
  fill: #fff;
}
.app-body {
  display: flex;
  flex: 1;
  min-height: 0;
}
.sidebar {
  width: 131px;
  background: #2b3c4b;
  color: #fff;
}
.profile {
  height: 89px;
  padding: 11px 15px 0;
}
.avatar {
  display: flex;
  align-items: center;
  justify-content: center;
  width: 42px;
  height: 42px;
  margin-bottom: 5px;
  border: 1px solid #fff;
  border-radius: 6px;
  background: #0ba17f;
}
.avatar svg {
  width: 28px;
  height: 26px;
  fill: #fff;
}
.profile b {
  display: block;
}
.profile p {
  display: flex;
  align-items: center;
  gap: 2px;
  margin-top: 4px;
}
.profile i {
  width: 6px;
  height: 6px;
  border-radius: 50%;
  background: #66b8a6;
}
.group.open {
  padding-bottom: 3px;
  background: #22313d;
}
.group-head {
  display: flex;
  align-items: center;
  height: 27px;
  padding: 0 12px;
  font-weight: bold;
}
.open .group-head {
  height: 25px;
}
.group-head svg {
  width: 9px;
  height: 9px;
}
.group-head span {
  flex: 1;
  margin-left: 12px;
}
.group-head .arrow {
  width: 7px;
  height: 7px;
}
.group ul {
  display: flex;
  flex-direction: column;
  height: 183px;
  padding: 3px 0 0 39px;
  list-style: none;
}
.group li {
  display: flex;
  flex: 1;
  align-items: center;
}
.content {
  flex: 1;
  min-width: 0;
  background: #f6f6f5;
}
.page-tabs {
  display: flex;
  align-items: center;
  height: 24px;
  border-bottom: 1px solid #999;
  background: #f9f9f9;
}
.page-tabs a {
  padding: 0 9px;
}
.page-tabs .spacer {
  flex: 1;
}
.page-tabs button {
  display: flex;
  align-items: center;
  justify-content: center;
  height: 23px;
  color: #555;
  border-left: 1px solid #ddd;
}
.icon-btn {
  width: 24px;
}
.icon-btn:first-child {
  border-right: 1px solid #ddd;
}
.icon-btn svg, .pager svg {
  width: 7px;
  height: 7px;
}
.page-tabs .ops {
  width: 47px;
  gap: 2px;
}
.ops svg {
  width: 5px;
  height: 5px;
}
.page {
  padding: 12px 12px 0 11px;
}
.info-tabs {
  display: flex;
  height: 24px;
  border-bottom: 1px solid #ddd;
}
.info-tabs a {
  padding: 6px 9px;
}
.info-tabs .on {
  border: 1px solid #ddd;
  border-bottom: 0;
  background: #fafafa;
}
.info {
  display: grid;
  grid-template-columns: 54px 1fr;
  gap: 6px 12px;
  align-items: center;
  padding: 11px 16px 0 0;
}
.info label {
  text-align: right;
}
.page input {
  height: 19px;
  padding: 0 3px;
  border: 1px solid #d4d4d4;
  border-radius: 1px;
  background: #fbfbfb;
}
.info-actions {
  display: flex;
  justify-content: flex-end;
  padding: 6px 184px 0 0;
}
.info-actions button, .state-btns button {
  height: 19px;
  padding: 0 7px;
  border: 1px solid #d4d4d4;
  background: #fbfbfb;
}
.state-btns {
  display: flex;
  margin: 14px 0 5px 10px;
}
.state-btns .red {
  border-color: #e5503c;
  background: #e5503c;
  color: #fff;
}
.filter {
  margin: 0 18px 2px 4px;
  padding: 6px;
  background: #fafafa;
}
.filter input {
  display: block;
  width: 180px;
}
.grid-box {
  margin: 0 18px 0 10px;
  border: 1px solid #d6d6d6;
  background: #f9f9f9;
}
.grid-scroll {
  height: 247px;
  padding-right: 12px;
}
.grid {
  width: 100%;
  height: 151px;
  border-collapse: collapse;
  table-layout: fixed;
  border-right: 1px solid #ddd;
}
.grid th {
  height: 21px;
  padding: 0;
  background: #ebebeb;
  font-weight: normal;
}
.grid td {
  padding: 0;
  border-bottom: 1px dashed #ccc;
}
.grid th:nth-child(2), .grid td:nth-child(2), .grid td:nth-child(3), .grid th:nth-child(3) {
  text-align: left;
}
.grid td:first-child, .grid td:last-child {
  text-align: center;
}
.grid a {
  color: #1c1ce0;
  text-decoration: underline;
}
.grid .sel {
  background: #fdf0d8;
}
.c-no {
  width: 24px;
}
.c-id {
  width: 52px;
}
.c-dl {
  width: 180px;
}
.pager {
  display: flex;
  align-items: center;
  gap: 9px;
  height: 19px;
  padding: 0 5px 0 7px;
  border-top: 1px solid #ddd;
}
.pager button {
  color: #888;
}
.pager input {
  width: 24px;
  height: 13px;
  margin-left: 9px;
  text-align: center;
}
.pager input + span {
  margin-left: -7px;
}
.pager .total {
  margin-left: auto;
}

/* borehole log dialog */
.shade {
  position: absolute;
  inset: 0;
  display: flex;
  justify-content: center;
  align-items: flex-start;
  padding-top: 30px;
  background: rgba(0, 0, 0, 0.3);
}
.modal {
  width: 803px;
  background: #fff;
  box-shadow: 1px 1px 40px rgba(0, 0, 0, 0.3);
}
.modal > header {
  display: flex;
  align-items: center;
  justify-content: space-between;
  height: 24px;
  padding: 0 8px;
  background: #0daa9c;
  color: #fff;
}
.modal h2 {
  font-size: 9px;
  line-height: 12px;
}
.modal > header svg {
  width: 8px;
  height: 8px;
}
.modal-body {
  position: relative;
  display: flex;
}
.side {
  flex: 1;
  padding: 6px 9px;
}
.side select {
  width: 72px;
  height: 17px;
  padding: 0 4px;
  border: 1px solid #bbb;
  border-radius: 2px;
  background: #fff;
}
.side.right {
  display: flex;
  flex-direction: column;
  align-items: flex-end;
  margin-right: -7px;
  padding-top: 9px;
}
.tools {
  display: flex;
  gap: 8px;
}
.tools svg {
  width: 13px;
  height: 13px;
}
.next {
  display: flex;
  align-items: center;
  gap: 4px;
  margin: 246px 5px 0 0;
  font-size: 9px;
  line-height: 12px;
  color: #c0c0ee;
}
.next svg {
  width: 7px;
  height: 7px;
}
.scrollbar {
  width: 4px;
  margin: 2px 3px 4px 0;
  border-radius: 2px;
  background: #999;
}
.cursor {
  position: absolute;
  left: 479px;
  top: 192px;
  width: 8px;
  height: 13px;
}
.sheet {
  width: 381px;
  padding: 0 8px 7px 17px;
  border: 1px solid #888;
  border-bottom-width: 2px;
  font: 8px/8px "Liberation Mono", "Noto Sans CJK SC", monospace;
}
.sheet h3 {
  padding: 9px 9px 13px 0;
  font-size: 21px;
  font-weight: 300;
  line-height: 22px;
  text-align: center;
}
.log {
  width: 355px;
  border-collapse: collapse;
  table-layout: fixed;
  font-size: 8px;
}
.log td, .log th {
  padding: 0;
  border: 1px solid #aaa;
  font-weight: normal;
  white-space: nowrap;
}
.log + .log {
  margin-top: -1px;
}
.log .n {
  font-size: 7px;
}
.meta tr {
  height: 14px;
}
.meta tr:first-child, .meta tr:last-child {
  height: 15px;
}
.meta td {
  padding-left: 3px;
}
.meta .coord {
  padding: 0;
  text-align: center;
}
.strata thead tr {
  height: 58px;
}
.v {
  display: inline-block;
  writing-mode: vertical-rl;
  text-orientation: upright;
}
.strata small {
  display: block;
  margin-top: 4px;
  font-size: 7px;
}
.scale .n {
  display: block;
  padding-top: 16px;
}
.strata td {
  font-family: "Liberation Serif", serif;
  font-size: 7px;
  text-align: center;
}
.h42 { height: 42px; }
.h41 { height: 41px; }
.h53 { height: 53px; }
.h47 { height: 47px; }
.h23 { height: 23px; }
.h72 { height: 72px; }
.h30 { height: 30px; }
.column svg {
  width: 100%;
  height: 319px;
}
.column .r {
  font: 7px "Liberation Serif", serif;
  fill: #fff;
}
.strata .desc, .strata .remark, .strata .spt {
  font-family: "Liberation Mono", "Noto Sans CJK SC", monospace;
  font-size: 6px;
}
.strata .desc, .strata .remark {
  padding-left: 3px;
  text-align: left;
}
.strata .pair {
  padding: 0;
  vertical-align: top;
}
.pair p {
  padding: 2px 3px 0;
}
.pair p:first-child {
  height: 28px;
  margin-bottom: 20px;
  border-bottom: 1px solid #aaa;
  border-radius: 0 0 3px 3px;
}
.strata .spt {
  vertical-align: top;
}
.test span {
  display: block;
  height: 7px;
  line-height: 6px;
}
.test span:first-child {
  border-bottom: 1px solid #aaa;
}
.test span + span {
  height: 6px;
}
.test.first {
  margin-top: 94px;
}
.test.second {
  margin-top: 98px;
}
.sign tr {
  height: 15px;
}
.sign td {
  padding-left: 3px;
}
.w18 { width: 18px; }
.w20 { width: 20px; }
.w27 { width: 27px; }
.w36 { width: 36px; }
.w40 { width: 40px; }
.w44 { width: 44px; }
.w46 { width: 46px; }
.w48 { width: 48px; }
.w49 { width: 49px; }
.w53 { width: 53px; }
.w55 { width: 55px; }
.w60 { width: 60px; }

/* windows taskbar */
.taskbar {
  display: flex;
  align-items: center;
  height: 27px;
  background: linear-gradient(90deg, #1e3540, #1b3542 40%, #16263f 85%, #18243c);
  color: #fff;
}
.task {
  display: flex;
  align-items: center;
  justify-content: center;
  width: 26px;
  height: 27px;
  margin: 0 3px;
  border-bottom: 2px solid #8cc8f0;
}
.task.plain {
  margin-right: 5px;
  border-color: transparent;
}
.task.current {
  width: 32px;
  margin: 0;
  background: #4b5f68;
}
.task svg {
  width: 18px;
  height: 18px;
}
.task.plain svg {
  width: 16px;
  height: 16px;
}
.tray {
  display: flex;
  align-items: center;
  gap: 5px;
  margin-left: auto;
}
.tray svg {
  width: 11px;
  height: 11px;
}
.tray span {
  margin-right: 4px;
  font-size: 9px;
}
.clock {
  display: flex;
  flex-direction: column;
  align-items: center;
  width: 58px;
  font: 8px/12px "Noto Sans", sans-serif;
}
.notice {
  padding: 0 16px 0 4px;
}
.notice svg {
  width: 12px;
  height: 12px;
}
```
